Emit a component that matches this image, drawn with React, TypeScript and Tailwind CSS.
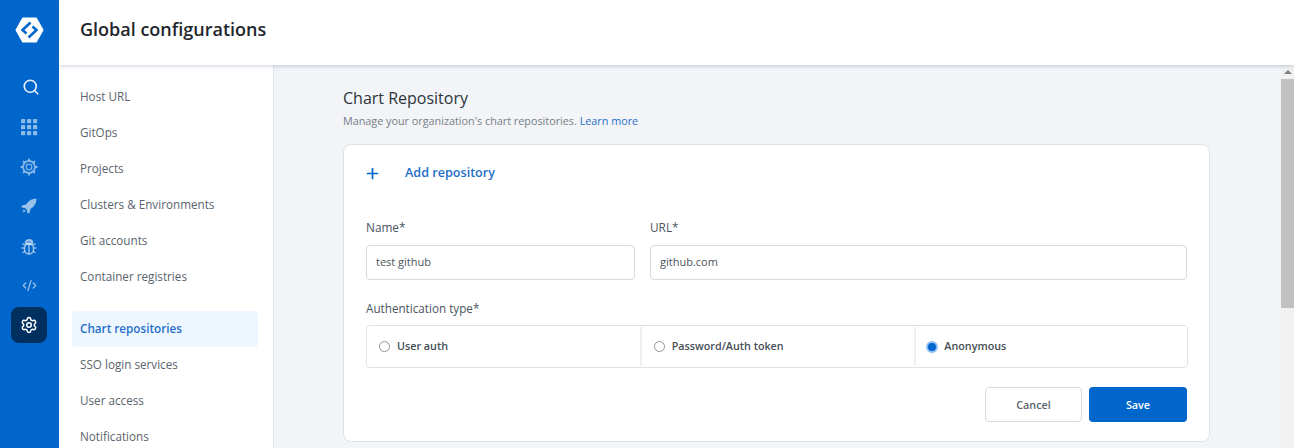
import React from 'react';
import { Search, CodeXml, Settings, Plus } from 'lucide-react';

const NAV_TOP = ['Host URL', 'GitOps', 'Projects', 'Clusters & Environments', 'Git accounts', 'Container registries'];
const NAV_BOTTOM = ['SSO login services', 'User access', 'Notifications'];

const Logo = () => (
  <svg width="29" height="26" viewBox="0 0 29 26" fill="none">
    <path d="M8 1.500H21L27.500 13L21 24.500H8L1.500 13Z" fill="#fff" stroke="#fff" strokeWidth="2" strokeLinejoin="round" />
    <path d="M15.500 5.500L7.500 13L11.500 16.500M13.500 20.500L21.500 13L17.500 9.500" stroke="#0066cc" strokeWidth="2.600" fill="none" />
  </svg>
);

const AppsGrid = () => (
  <svg width="18" height="18" viewBox="0 0 18 18" fill="#fff" fillOpacity="0.55">
    {[1, 7, 13].map((y) =>
      [1, 7, 13].map((x) => <rect key={`${x}-${y}`} x={x} y={y} width="4.200" height="4.200" rx="0.800" />)
    )}
  </svg>
);

const HelmGear = () => (
  <svg width="20" height="20" viewBox="0 0 20 20" fill="none" stroke="#fff" strokeOpacity="0.5">
    <circle cx="10" cy="10" r="6" strokeWidth="1.800" />
    <circle cx="10" cy="10" r="2.800" strokeWidth="1.300" />
    <path
      strokeWidth="1.800"
      d="M10 1.500v2M10 16.500v2M1.500 10h2M16.500 10h2M4 4l1.400 1.400M14.600 14.600L16 16M4 16l1.400-1.400M14.600 5.400L16 4"
    />
  </svg>
);

const RocketIcon = () => (
  <svg width="18" height="18" viewBox="0 0 18 18" fill="#fff" fillOpacity="0.6">
    <path d="M16.500 1.500C12 1.500 8.500 3.500 6 7.500L2 8.500L1.500 10.500L5 11L7 13L7.500 16.500L9.500 16L10.500 12C14.500 9.500 16.500 6 16.500 1.500Z" />
    <path d="M3.800 12.200L5.800 14.200L2.500 15.500Z" />
  </svg>
);

const BugIcon = () => (
  <svg width="18" height="18" viewBox="0 0 18 18" fill="none" stroke="#fff" strokeOpacity="0.55" strokeWidth="1.500">
    <path d="M5.500 4.500C5.500 2.800 7 1.800 9 1.800S12.500 2.800 12.500 4.500V6H5.500Z" fill="#fff" fillOpacity="0.4" />
    <rect x="4.500" y="6" width="9" height="10" rx="4.500" />
    <path d="M9 6v10M1.500 10h3M13.500 10h3M2.500 5.500L5 7.500M15.500 5.500L13 7.500M2.500 15L5 13M15.500 15L13 13" />
  </svg>
);

const Radio = ({ label, checked }: { label: string; checked?: boolean }) => (
  <div className={`flex-1 flex items-center border-r-2 border-[#edf0f3] last:border-r-0 ${checked ? 'pl-[10px] gap-[6px]' : 'pl-[12px] gap-[7px]'}`}>
    {checked ? (
      <span className="w-[12px] h-[12px] rounded-full bg-[#0066cc] border-[2px] border-[#8fbdf5]" />
    ) : (
      <span className="w-[11px] h-[11px] rounded-full border border-[#8f969e] bg-white" />
    )}
    <span className="text-[10.750px] font-semibold text-[#454e56]">{label}</span>
  </div>
);

const Field = ({ label, value, className }: { label: string; value: string; className: string }) => (
  <div className={className}>
    <div className="text-[11.800px] leading-[18px] text-[#4a5560] mb-[9px]">{label}</div>
    <div className="h-[35px] border border-[#d6dbdf] rounded-[4px] flex items-center px-[9px] text-[11px] text-[#4a5560]">
      {value}
    </div>
  </div>
);

const NavItem = ({ label, active }: { label: string; active?: boolean }) => (
  <div
    className={`h-[36px] flex items-center pl-[8px] rounded-[4px] text-[11.700px] ${
      active ? 'bg-[#eef6ff] text-[#1f6fc9] font-semibold' : 'text-[#5a646d]'
    }`}
  >
    {label}
  </div>
);

export default function App() {
  return (
    <div className="flex h-[448px] w-[1294px] overflow-hidden bg-[#f2f4f7] font-['Open_Sans',sans-serif]">
      <aside className="w-[59px] shrink-0 bg-[#0066cc] flex flex-col items-center pr-[1px]">
        <div className="h-[60px] w-full flex items-center justify-center">
          <Logo />
        </div>
        <div className="h-[40px] mt-[7px] flex items-center justify-center">
          <Search size={18} color="#fff" strokeOpacity={0.9} strokeWidth={2.200} className="ml-[3px]" />
        </div>
        <div className="h-[40px] flex items-center justify-center">
          <AppsGrid />
        </div>
        <div className="h-[40px] flex items-center justify-center">
          <HelmGear />
        </div>
        <div className="h-[38px] flex items-center justify-center">
          <RocketIcon />
        </div>
        <div className="h-[40px] pt-[3px] flex items-center justify-center">
          <BugIcon />
        </div>
        <div className="h-[40px] mb-[2px] flex items-center justify-center">
          <CodeXml size={15} color="#fff" strokeOpacity={0.6} />
        </div>
        <div className="w-[36px] h-[36px] rounded-[8px] bg-[#00305f] flex items-center justify-center">
          <Settings size={18} color="#fff" />
        </div>
      </aside>

      <div className="flex-1 flex flex-col min-w-0">
        <header className="h-[65px] shrink-0 bg-white flex items-center pl-[21px] pb-[7px] shadow-[0_1px_4px_rgba(80,110,150,0.3)] relative z-10">
          <h1 className="text-[18px] font-semibold text-[#1f262c]">Global configurations</h1>
        </header>

        <div className="flex-1 flex min-h-0">
          <nav className="w-[215px] shrink-0 bg-white border-r border-[#e1e5e9] pl-[13px] pr-[15px] pt-[14px]">
            {NAV_TOP.map((label) => (
              <NavItem key={label} label={label} />
            ))}
            <div className="h-[16px]" />
            <NavItem label="Chart repositories" active />
            {NAV_BOTTOM.map((label) => (
              <NavItem key={label} label={label} />
            ))}
          </nav>

          <main className="flex-1 min-w-0 pl-[69px] pr-[71px] pt-[21px]">
            <h2 className="text-[16px] leading-[24px] text-[#2c343b]">Chart Repository</h2>
            <p className="text-[10.800px] leading-[16px] mt-[3px] text-[#767f87]">
              Manage your organization's chart repositories.{' '}
              <span className="font-medium text-[#1f6fc9]">Learn more</span>
            </p>

            <section className="mt-[15px] h-[298px] bg-white border border-[#dfe3e7] rounded-[8px] pl-[22px] pr-[21px]">
              <div className="flex items-center h-[57px] mb-[16px]">
                <Plus size={17} color="#0066cc" strokeWidth={2.400} className="ml-[-2px]" />
                <span className="ml-[24px] text-[12.600px] font-semibold text-[#1f6fc9]">Add repository</span>
              </div>

              <div className="flex gap-[15px] pr-[1px]">
                <Field label="Name*" value="test github" className="w-[269px]" />
                <Field label="URL*" value="github.com" className="flex-1" />
              </div>

              <div className="mt-[19px] text-[11.700px] leading-[18px] text-[#4a5560]">Authentication type*</div>
              <div className="mt-[8px] h-[43px] border border-[#dfe3e7] rounded-[4px] flex py-[1px]">
                <Radio label="User auth" />
                <Radio label="Password/Auth token" />
                <Radio label="Anonymous" checked />
              </div>

              <div className="mt-[19px] flex justify-end gap-[7px] pr-[1px]">
                <button className="w-[97px] h-[35px] pt-[2px] bg-white border border-[#d6dbdf] rounded-[4px] text-[10.800px] font-semibold text-[#5a646d]">
                  Cancel
                </button>
                <button className="w-[98px] h-[35px] pt-[2px] bg-[#0066cc] rounded-[4px] text-[10.800px] font-semibold text-white">
                  Save
                </button>
              </div>
            </section>
          </main>

          <div className="w-[13px] shrink-0 bg-[#f1f1f1] flex flex-col">
            <div className="h-[14px] flex items-center justify-center">
              <div className="w-0 h-0 border-x-[4px] border-x-transparent border-b-[4px] border-b-[#7f7f7f]" />
            </div>
            <div className="h-[229px] bg-[#c1c1c1]" />
          </div>
        </div>
      </div>
    </div>
  );
}
